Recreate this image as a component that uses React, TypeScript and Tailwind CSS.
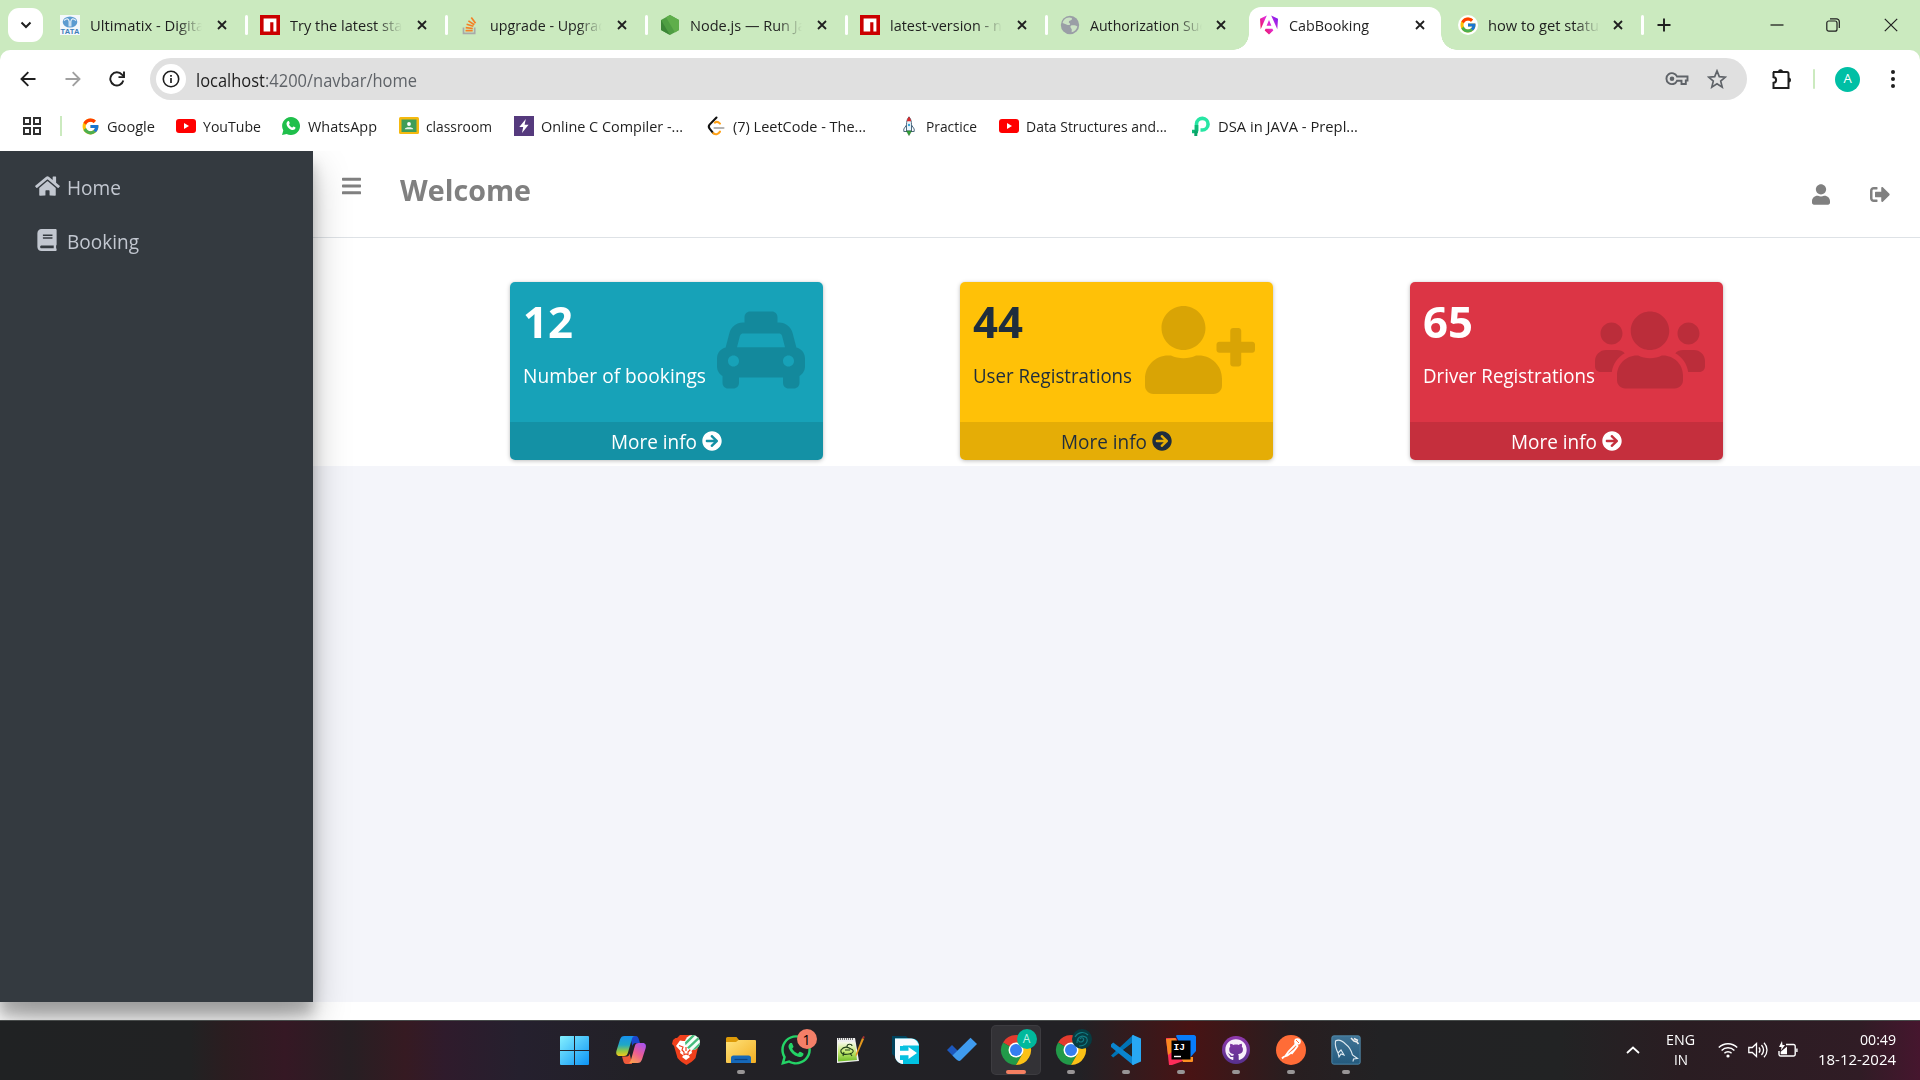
import { useLayoutEffect, useRef, useState, type ReactNode } from "react";
import { FaArrowCircleRight, FaBars, FaBook, FaGithub, FaHome, FaSignOutAlt, FaTaxi, FaUser, FaUserPlus, FaUsers, FaWhatsapp } from "react-icons/fa";
import { FcGoogle } from "react-icons/fc";

/** Single-line label condensed or expanded to a set width. */
function Label({ w, className = "", children }: { w: number; className?: string; children: string }) {
  const ref = useRef<HTMLSpanElement>(null);
  const [scale, setScale] = useState(1);
  useLayoutEffect(() => {
    if (ref.current) setScale(w / ref.current.getBoundingClientRect().width * scale);
  }, [w]);
  return (
    <span className={"block shrink-0 whitespace-nowrap " + className} style={{ width: w }}>
      <span ref={ref} className="inline-block origin-left" style={{ transform: `scaleX(${scale})` }}>{children}</span>
    </span>
  );
}

/* ---------- favicons ---------- */
const Tata = () => (
  <svg viewBox="0 0 20 20" className="h-5 w-5">
    <rect width="20" height="20" fill="#f4f8fb" />
    <ellipse cx="10" cy="7" rx="7.3" ry="5.6" fill="#5b9bd0" />
    <path d="M4 5.5c3-2.5 4.5-2 5.2 1v5M16 5.5c-3-2.5-4.5-2-5.2 1v5" stroke="#e8f1f8" strokeWidth="1.2" fill="none" />
    <text x="10" y="19" fontSize="7.5" fontWeight="800" textAnchor="middle" textLength="19" fill="#3f7fb9" fontFamily="Liberation Sans">TATA</text>
  </svg>
);
const Npm = () => (
  <svg viewBox="0 0 20 20" className="h-5 w-5">
    <rect width="20" height="20" fill="#cb0000" />
    <path d="M3.6 3.6h12.8v12.8h-3V7.2h-3.2v9.2H3.6z" fill="#fff" />
  </svg>
);
const Stack = () => (
  <svg viewBox="0 0 20 20" className="h-5 w-5" fill="none" strokeWidth="1.7">
    <path d="M3.5 12.5v5.8h11.2v-5.8" stroke="#a9a9a9" />
    <path d="M5.5 15.6h7.2M5.7 12.6l7.1.9M6.6 9.2l6.8 2M8.4 5.9l5.9 3.8M11.3 2.6l4.2 5.7" stroke="#f48024" />
  </svg>
);
const Node = () => (
  <svg viewBox="0 0 20 20" className="h-5 w-5">
    <path d="M10 0l9 5v10l-9 5-9-5V5z" fill="#4f9e43" />
    <path d="M10 0l9 5v10l-4 2.4L6 2.3z" fill="#5fae4b" />
    <path d="M1 5l9 15-9-5z" fill="#3c8637" />
  </svg>
);
const Globe = () => (
  <svg viewBox="0 0 20 20" className="h-5 w-5">
    <circle cx="10" cy="10" r="9.2" fill="#9a9ea6" />
    <path d="M9 2.4c2 0 4 .8 2.6 2.4-1 1-2.6.6-2.8 2.2-.2 1.2 1.6 1 1.2 2.4-.4 1.2-2.4.6-3.6 0L2.6 8C3.2 5 5.6 2.6 9 2.4zM11 10.6c2-.8 5-.2 6.4 1-.8 3-2.8 5-5.6 5.6-.6-1.4.6-2.2-.4-3.4-.8-1-1.6-2.4-.4-3.2z" fill="#cbe2c4" />
  </svg>
);
const Angular = () => (
  <svg viewBox="0 0 20 20" className="h-5 w-5">
    <defs>
      <linearGradient id="ng" x1="0" y1="0.8" x2="1" y2="0.1">
        <stop offset="0" stopColor="#f0123f" /><stop offset=".5" stopColor="#e32bd6" /><stop offset="1" stopColor="#7a1cf0" />
      </linearGradient>
    </defs>
    <path d="M12.2.6l6.8 3.2-.7 10.4zM14.3 15.6L10 19.4l-4.3-3.8.9-1.8h6.8zM7.6 10.8L10 5l2.4 5.8zM1.7 14.2L1 3.8 7.8.6z" fill="url(#ng)" />
  </svg>
);
const YouTube = () => (
  <svg viewBox="0 0 20 20" className="h-5 w-5">
    <rect y="3" width="20" height="14" rx="3" fill="#f00" />
    <path d="M8 7l5 3-5 3z" fill="#fff" />
  </svg>
);
const WhatsAppSmall = () => (
  <svg viewBox="0 0 20 20" className="h-5 w-5">
    <path d="M10 1a9 9 0 11-4.3 16.9L1 19l1.3-4.5A9 9 0 0110 1z" fill="#1fbf4b" />
    <path d="M6.8 5.3c.8-.6 1.3-.1 1.9 1.7.2.7-.8 1-.6 1.5.6 1.4 1.6 2.3 2.9 2.9.7.2 1-1.2 1.7-1 1.5.6 2 1 1.8 1.6-.5 2-2.6 2.5-4.9 1.4C7.5 12.5 5.8 10.500 5.500 8c0-1.200.5-2.100 1.300-2.700z" fill="#fff" />
  </svg>
);
const Classroom = () => (
  <svg viewBox="0 0 20 20" className="h-5 w-5">
    <rect y="1" width="20" height="17" rx="1.5" fill="#f5b90f" />
    <rect x="2.5" y="3.5" width="15" height="12.5" fill="#3f9d58" />
    <circle cx="10" cy="8" r="1.9" fill="#fff" />
    <path d="M5.8 13.3c0-2.6 8.4-2.6 8.4 0z" fill="#e5f3e8" />
  </svg>
);
const Bolt = () => (
  <svg viewBox="0 0 20 20" className="h-5 w-5">
    <rect width="20" height="20" fill="#553a7d" />
    <path d="M11.8 3L5.3 11h3.9L8 17l6.6-8.3h-4z" fill="#fff" />
  </svg>
);
const Leet = () => (
  <svg viewBox="0 0 20 20" className="h-5 w-5" fill="none" strokeWidth="2.1" strokeLinecap="round">
    <path d="M10.5 1.5L3.6 8.6c-1 1.2-1 2.7 0 4l3.6 4.6" stroke="#111" />
    <path d="M14 15.7c-2 3-4.6 3.2-6.8 1.5M14 7.6c-1.6-1.7-3.5-2.3-5.2-1" stroke="#ffa116" />
    <path d="M8.5 12h9" stroke="#b3b3b3" />
  </svg>
);
const Rocket = () => (
  <svg viewBox="0 0 20 20" className="h-5 w-5">
    <path d="M7.5 9l-2.700 4v2.500h10.400V13L12.500 9z" fill="#fff" stroke="#4d6980" />
    <path d="M10 .8c2 2 2.500 5 2.500 8V15h-5V8.800c0-3 .5-6 2.500-8z" fill="#eaf5fb" stroke="#4d6980" />
    <path d="M10 .8C8.800 2 8.200 3.500 7.900 5.200h4.200C11.800 3.500 11.200 2 10 .8z" fill="#d92b2b" />
    <circle cx="10" cy="9" r="1.2" fill="#3ca4d8" />
    <path d="M7.500 15h5L10 19.500z" fill="#2fa836" stroke="#28692c" strokeWidth=".6" />
  </svg>
);
const Prep = () => (
  <svg viewBox="0 0 20 20" className="h-5 w-5" fill="none">
    <path d="M5.500 15V7.800a5.800 5.800 0 115.800 6.200H9.500" stroke="#27e6a4" strokeWidth="3.6" />
    <path d="M5.500 9v6.500M1 15.500h6" stroke="#0eb978" strokeWidth="3.6" />
    <path d="M4.800 14.500V20" stroke="#0aa468" strokeWidth="3" />
  </svg>
);

/* ---------- tab strip ---------- */
const Close = () => (
  <svg viewBox="0 0 10 10" className="h-[10px] w-[10px] shrink-0"><path d="M1 1l8 8M9 1L1 9" stroke="#1f1f1f" strokeWidth="1.8" /></svg>
);

function Tab({ icon, title, w, size = "w-[200px]", close = "ml-[15px]", divider = "ml-[18px]" }: { icon: ReactNode; title: string; w: number; size?: string; close?: string; divider?: string }) {
  return (
    <div className={"flex h-full shrink-0 items-center " + size}>
      <span className="flex w-5 shrink-0 justify-center">{icon}</span>
      <span className="ml-[10px] w-[112px] shrink-0 overflow-hidden pt-px [mask-image:linear-gradient(to_right,black_78%,transparent)]">
        <Label w={w}>{title}</Label>
      </span>
      <span className={"flex shrink-0 " + close}><Close /></span>
      {divider && <span className={"h-5 w-[3px] shrink-0 rounded-full bg-white " + divider} />}
    </div>
  );
}

function TabStrip() {
  return (
    <div className="flex h-[50px] items-center bg-[#cbeabf] text-[15px] text-[#1f1f1f]">
      <div className="ml-2 flex h-[34px] w-[35px] shrink-0 items-center justify-center rounded-[11px] bg-white">
        <svg viewBox="0 0 12 8" className="h-[8px] w-[12px]"><path d="M1.5 1.5L6 6l4.5-4.500" fill="none" stroke="#1f1f1f" strokeWidth="2" /></svg>
      </div>
      <div className="ml-[17px] flex h-full">
        <Tab icon={<Tata />} title="Ultimatix - Digital" w={118} />
        <Tab icon={<Npm />} title="Try the latest stable" w={133} />
        <Tab icon={<Stack />} title="upgrade - Upgrade" w={125} />
        <Tab icon={<Node />} title="Node.js — Run Jav" w={123} />
        <Tab icon={<Npm />} title="latest-version - npm" w={134} />
        <Tab icon={<Globe />} title="Authorization Succ" w={123} size="w-[189px]" close="ml-[14px]" divider="" />
      </div>
      <div className="relative mt-[7px] flex h-[43px] w-[192px] shrink-0 items-center rounded-t-[12px] bg-white pb-[7px]">
        <span className="absolute -left-4 bottom-0 h-4 w-4 bg-[radial-gradient(circle_at_0_0,#cbeabf_15.5px,white_16px)]" />
        <span className="absolute -right-4 bottom-0 h-4 w-4 bg-[radial-gradient(circle_at_100%_0,#cbeabf_15.5px,white_16px)]" />
        <span className="ml-[10px]"><Angular /></span>
        <span className="ml-[10px] pt-px"><Label w={80}>CabBooking</Label></span>
        <span className="ml-[46px] flex"><Close /></span>
      </div>
      <div className="ml-[17px] flex h-full">
        <Tab icon={<span className="flex h-5 w-5 items-center justify-center rounded-full bg-white"><FcGoogle size={18} /></span>} title="how to get status" w={118} size="w-[187px]" close="ml-[13px]" divider="ml-[18px]" />
      </div>
      <svg viewBox="0 0 14 14" className="ml-[12px] h-[14px] w-[14px]"><path d="M7 .5v13M.5 7h13" stroke="#1f1f1f" strokeWidth="1.9" /></svg>
      <div className="ml-auto flex items-center text-[#1f1f1f]">
        <svg viewBox="0 0 14 14" className="h-[14px] w-[14px]"><path d="M.5 7h13" stroke="currentColor" strokeWidth="1.3" /></svg>
        <svg viewBox="0 0 14 14" className="ml-[42px] h-[14px] w-[14px]" fill="none" stroke="currentColor" strokeWidth="1.2"><rect x=".8" y="3" width="10.2" height="10.2" rx="2" /><path d="M4 .8h6.500a2.800 2.800 0 012.800 2.800V10" /></svg>
        <svg viewBox="0 0 14 14" className="ml-[44px] mr-[22px] h-[14px] w-[14px]"><path d="M.8.8l12.400 12.400M13.200.8L.8 13.200" stroke="currentColor" strokeWidth="1.2" /></svg>
      </div>
    </div>
  );
}

/* ---------- toolbar ---------- */
function Toolbar() {
  return (
    <div className="bg-[#cbeabf]">
      <div className="flex h-[58px] items-center rounded-t-[10px] bg-white text-[#1f1f1f]">
        <svg viewBox="0 0 16 16" className="ml-[20px] h-4 w-4" fill="none" stroke="#1f1f1f" strokeWidth="1.9"><path d="M15.5 8H2M8.300 1.200L1.500 8l6.800 6.800" /></svg>
        <svg viewBox="0 0 16 16" className="ml-[29px] h-4 w-4" fill="none" stroke="#a0a0a0" strokeWidth="1.9"><path d="M.5 8H14M7.700 1.200L14.500 8l-6.800 6.800" /></svg>
        <svg viewBox="0 0 16 16" className="ml-[28px] h-4 w-4" fill="none" stroke="#1f1f1f" strokeWidth="1.9"><path d="M14.300 9.500A6.600 6.600 0 1113 3.700l2 2" /><path d="M15 .5v5.600H9.500" /></svg>
        <div className="ml-[25px] flex h-[42px] w-[1597px] shrink-0 items-center rounded-full bg-[#e0e0e0]">
          <span className="ml-[6px] flex h-[30px] w-[30px] items-center justify-center rounded-full bg-white">
            <svg viewBox="0 0 18 18" className="h-[18px] w-[18px]" fill="none" stroke="#1f1f1f"><circle cx="9" cy="9" r="7.7" strokeWidth="1.6" /><path d="M9 8v5M9 5v1.800" strokeWidth="1.7" /></svg>
          </span>
          <span className="ml-[10px] flex pt-[2px] text-[17.500px]">
            <Label w={69}>localhost</Label>
            <Label w={152} className="text-[#5f6368]">:4200/navbar/home</Label>
          </span>
          <svg viewBox="0 0 24 16" className="ml-auto h-4 w-6" fill="none" stroke="#5f6368" strokeWidth="1.9"><path d="M12 5.500h10.500v4H20.800V13H16.500V9.800H12a5.500 5.500 0 110-4.300z" /><circle cx="7" cy="7.700" r="2.3" fill="#5f6368" stroke="none" /></svg>
          <svg viewBox="0 0 20 20" className="ml-[18px] mr-[20px] h-5 w-5" fill="none" stroke="#5f6368" strokeWidth="1.7"><path d="M10 1.900l2.300 5.700 6.100.5-4.700 4 1.500 6L10 14.800l-5.200 3.300 1.500-6-4.700-4 6.100-.5z" /></svg>
        </div>
        <svg viewBox="0 0 22 22" className="ml-[23px] h-[22px] w-[22px]" fill="none" stroke="#1f1f1f" strokeWidth="2"><path d="M3 4h14a1.500 1.500 0 011.500 1.500V20H3.500v-5.200c3.500-.3 3.500-5.300 0-5.600V4z" /><path d="M8 3.700a2.500 2.500 0 015 0zM18.500 9.500a2.500 2.500 0 010 5z" fill="#1f1f1f" stroke="none" /></svg>
        <span className="ml-[21px] h-5 w-[2px] rounded bg-[#cbeabf]" />
        <span className="ml-[20px] flex h-[25px] w-[25px] items-center justify-center rounded-full bg-[#00bfa5] text-[13px] text-white">A</span>
        <svg viewBox="0 0 4 18" className="ml-[31px] h-[18px] w-1" fill="#1f1f1f"><circle cx="2" cy="2" r="2" /><circle cx="2" cy="9" r="2" /><circle cx="2" cy="16" r="2" /></svg>
      </div>
    </div>
  );
}

function Bookmark({ icon, text, w, slot }: { icon: ReactNode; text: string; w: number; slot: string }) {
  return (
    <div className={"flex shrink-0 items-center gap-2 " + slot}>
      <span className="shrink-0">{icon}</span>
      <Label w={w} className="-ml-px">{text}</Label>
    </div>
  );
}

function Bookmarks() {
  return (
    <div className="flex h-[43px] items-center bg-white pb-[7px] text-[15px] text-[#1f1f1f]">
      <svg viewBox="0 0 18 18" className="ml-[23px] h-[18px] w-[18px]" fill="none" stroke="#303030" strokeWidth="2"><path d="M1 1h6v6H1zM11 1h6v6h-6zM1 11h6v6H1zM11 11h6v6h-6z" /></svg>
      <span className="ml-[19px] mr-[17px] h-5 w-[2px] bg-[#cbeabf]" />
      <Bookmark icon={<FcGoogle size={19} />} text="Google" w={48} slot="w-[97px] pl-[2px]" />
      <Bookmark icon={<YouTube />} text="YouTube" w={58} slot="w-[105px]" />
      <Bookmark icon={<WhatsAppSmall />} text="WhatsApp" w={69} slot="w-[118px]" />
      <Bookmark icon={<Classroom />} text="classroom" w={66} slot="w-[115px]" />
      <Bookmark icon={<Bolt />} text="Online C Compiler -..." w={142} slot="w-[192px]" />
      <Bookmark icon={<Leet />} text="(7) LeetCode - The..." w={133} slot="w-[193px]" />
      <Bookmark icon={<Rocket />} text="Practice" w={51} slot="w-[100px]" />
      <Bookmark icon={<YouTube />} text="Data Structures and..." w={141} slot="w-[192px]" />
      <Bookmark icon={<Prep />} text="DSA in JAVA - Prepl..." w={140} slot="w-[190px]" />
    </div>
  );
}

/* ---------- dashboard ---------- */
function StatCard({ n, nw, label, w, bg, fg, icon }: { n: string; nw: number; label: string; w: number; bg: string; fg: string; icon: ReactNode }) {
  return (
    <div className={"relative flex h-[178px] w-[313px] flex-col overflow-hidden rounded-[5px] " + bg + " " + fg}>
      <div className="flex h-[140px] flex-col pl-[13px]">
        <Label w={nw} className="mt-[7px] text-[43.500px] font-bold leading-[66px]">{n}</Label>
        <Label w={w} className="mt-[7px] text-[20px] leading-[28px]">{label}</Label>
      </div>
      <div className="absolute right-[18px] top-[24px] text-black/15">{icon}</div>
      <div className="flex h-[38px] items-center justify-center gap-[5px] bg-black/10 text-[20px]">
        <Label w={86} className="pt-[2px] leading-[36px]">More info</Label>
        <FaArrowCircleRight size={20} />
      </div>
    </div>
  );
}

const cardShadow = "rounded-[5px] shadow-[0_0_1px_rgba(0,0,0,.125),0_1px_4px_rgba(0,0,0,.25)]";

function Dashboard() {
  return (
    <div className="relative flex h-[869px] overflow-hidden bg-white">
      <aside className="relative z-10 h-[851px] w-[313px] shrink-0 bg-[#343a40] text-[20px] text-[#c2c7d0] shadow-[0_17.5px_35px_rgba(0,0,0,.25),0_12.5px_12.5px_rgba(0,0,0,.22)]">
        <div className="mt-[8px] flex h-[54px] items-center pl-[35px]">
          <span className="flex w-[25px] justify-center"><FaHome className="h-[22px] w-[25px]" /></span>
          <Label w={54} className="ml-[7px] pt-[3px]">Home</Label>
        </div>
        <div className="flex h-[54px] items-center pl-[34px]">
          <span className="flex w-[25px] justify-center"><FaBook className="h-[22px] w-[20px]" /></span>
          <Label w={72} className="ml-[8px] pt-[3px]">Booking</Label>
        </div>
      </aside>
      <main className="h-[851px] flex-1 bg-[#f4f5fa]">
        <div className="h-[315px] bg-white">
          <header className="flex h-[87px] items-start border-b border-[#dee2e6] text-[#808080]">
            <FaBars className="ml-[29px] mt-[24px] h-[22px] w-[19px]" />
            <Label w={131} className="ml-[39px] mt-[16px] text-[29px] font-bold leading-[46px]">Welcome</Label>
            <FaUser className="ml-auto mt-[33px] h-[21px] w-[18px]" />
            <FaSignOutAlt className="ml-[40px] mr-[30px] mt-[33px] h-[21px] w-[20px]" />
          </header>
          <div className="ml-[197px] mt-[44px] flex gap-[137px]">
            <div className={cardShadow}><StatCard n="12" nw={50} label="Number of bookings" w={183} bg="bg-[#17a2b8]" fg="text-white" icon={<FaTaxi className="h-[88px] w-[88px]" />} /></div>
            <div className={cardShadow}><StatCard n="44" nw={50} label="User Registrations" w={159} bg="bg-[#ffc107]" fg="text-[#1f2d3d]" icon={<FaUserPlus className="h-[88px] w-[110px]" />} /></div>
            <div className={cardShadow}><StatCard n="65" nw={50} label="Driver Registrations" w={172} bg="bg-[#dc3545]" fg="text-white" icon={<FaUsers className="h-[88px] w-[110px]" />} /></div>
          </div>
        </div>
      </main>
    </div>
  );
}

/* ---------- taskbar icons, drawn on a 30px grid ---------- */
const box = "h-[30px] w-[30px] overflow-visible";
const Windows = () => (
  <svg viewBox="0 0 30 30" className={box}>
    <defs><linearGradient id="win" x1="0" y1="0" x2="1" y2="1"><stop stopColor="#84f0ff" /><stop offset="1" stopColor="#0c93f5" /></linearGradient></defs>
    <path d="M0 2a1 1 0 011-1h13v14H0zM15 1h13a1 1 0 011 1v13H15zM0 16h14v14H1a1 1 0 01-1-1zM15 16h14v13a1 1 0 01-1 1H15z" fill="url(#win)" />
  </svg>
);
const Copilot = () => (
  <svg viewBox="0 0 30 30" className={box}>
    <defs>
      <linearGradient id="cp1" x1="0" y1="0" x2="0" y2="1"><stop stopColor="#1691ee" /><stop offset=".45" stopColor="#20a8c5" /><stop offset=".75" stopColor="#94c843" /><stop offset="1" stopColor="#f3c71b" /></linearGradient>
      <linearGradient id="cp2" x1=".8" y1="0" x2=".2" y2="1"><stop stopColor="#a953ed" /><stop offset=".5" stopColor="#ec5d93" /><stop offset="1" stopColor="#fba34c" /></linearGradient>
    </defs>
    <path d="M14 1h5.500c2.500 0 3 2 3.600 4L24 8h-4c-2 0-3 1-3.700 3z" fill="#1b47cd" />
    <path d="M16 29h-5.500c-2.500 0-3-2-3.500-4l-1-3.500h4.500c2 0 2.500-1 3.200-3z" fill="#ee5a3b" />
    <path d="M8.500 1H19c-2 0-2.700 1.500-3.400 4L12 17.500c-.8 2.500-1.500 3.500-4 3.500H3.500C.5 21-.2 18.500.4 16L4 4.500C5 2 6 1 8.500 1z" fill="url(#cp1)" />
    <path d="M21.500 28H12c2 0 2.500-1.500 3.200-4l3.500-12.500c.7-2.500 1.300-3.500 4-3.500h4c3 0 3.700 2.500 3 5L26 24.500c-1 2.500-2 3.500-4.500 3.500z" fill="url(#cp2)" />
  </svg>
);
const Brave = () => (
  <svg viewBox="0 0 30 30" className={box}>
    <defs><clipPath id="braveDisc"><circle cx="21.500" cy="7.500" r="7.500" /></clipPath></defs>
    <path d="M9 0h12l3 3 2 1 1 5 .5 1-3 13c-2 3-6 5-9 7-3-2-7-4-9-7L3 11l-2-2 1-4 2.500-2H6z" fill="#f0401c" />
    <path d="M9 5.500l3 .5h7l5 6-3.500 4 .5 2-3.500 2.500 1.500 1.500-4 3-4-3 1.500-1.500L9 18l.5-2L5 11z" fill="#fff" />
    <path d="M8 10.500l4 1.500-1 3 2 2v2.500M22 10.500L18 12l1 3-2 2v2.500M12.500 20l2.500-1 2.500 1M15 12v4" stroke="#f0401c" strokeWidth="1.200" fill="none" />
    <g clipPath="url(#braveDisc)">
      <rect x="13" width="17" height="16" fill="#f4fff8" />
      <path d="M12 11L24-1M15 15L30 1M20 18L32 6" stroke="#45bc7b" strokeWidth="2.300" />
    </g>
  </svg>
);
const Folder = () => (
  <svg viewBox="0 0 30 30" className={box}>
    <defs><linearGradient id="fold" x1="0" y1="0" x2="1" y2="1"><stop stopColor="#ffe27a" /><stop offset="1" stopColor="#f2ae22" /></linearGradient></defs>
    <path d="M0 3.500A1.500 1.500 0 011.500 2h9L13 5v5H0z" fill="#dd9a08" />
    <path d="M0 7h10l2.500-2H29a1 1 0 011 1v21a1 1 0 01-1 1H1a1 1 0 01-1-1z" fill="url(#fold)" />
    <path d="M5 28v-5a2.500 2.500 0 012.500-2.500h15A2.500 2.500 0 0125 23v5z" fill="#1668b8" />
    <path d="M8.500 24.500h13" stroke="#0b4282" strokeWidth="1.2" />
  </svg>
);
const WhatsAppApp = () => (
  <span className="relative">
    <FaWhatsapp size={34} className="-m-[2px] text-[#24d366]" />
    <span className="absolute -right-[6px] -top-[6px] flex h-5 w-5 items-center justify-center rounded-full bg-[#f47f68] text-[14px] text-black">1</span>
  </span>
);
const NotepadPP = () => (
  <svg viewBox="0 0 30 30" className={box}>
    <defs><linearGradient id="npp" x1="0" y1="0" x2="0" y2="1"><stop stopColor="#f6f7ed" /><stop offset=".5" stopColor="#c6ea72" /><stop offset="1" stopColor="#6fbd26" /></linearGradient></defs>
    <path d="M1 3h18l4 23-22 2z" fill="#eee" />
    <path d="M2 7h17l2 18-19 1.500z" fill="url(#npp)" />
    <path d="M2 4h16" stroke="#777" strokeWidth="2" strokeDasharray="1 1" />
    <path d="M5 15c3-4 7-3 10-1 4 1 2 5-2 5-5 1-9 0-8-4zM11 12c0-4 5-3 5-1M8 17l-1 4M14 18l2 3M9 15h5" fill="none" stroke="#24421c" strokeWidth="1.1" />
    <path d="M28 4l-7 16-1.500 2 .3-3L26 3z" fill="#e2971d" />
    <path d="M26 3l1.200-2 1.500.8L28 4z" fill="#a33" />
  </svg>
);
const Transfer = () => (
  <svg viewBox="0 0 30 30" className={box}>
    <path d="M1 1h14l6 6H8v18l-7-6z" fill="#00435d" />
    <path d="M4 3.500h17c4 0 7 3 7 7V29H12c-4 0-8-4-8-8z" fill="#00c2e2" />
    <path d="M4 3.500h16c4 0 7 3 8 7H12v18.500c-4 0-8-4-8-8z" fill="#f7fbff" />
    <path d="M9 11h17v14H9z" fill="#06c0e0" />
    <path d="M8 15.800h9.500V12l8.500 6-8.500 6v-3.800H8z" fill="#fff" />
  </svg>
);
const ToDo = () => (
  <svg viewBox="0 0 30 30" className={box}>
    <path d="M1 15l5-5 9.500 9.500-5 5z" fill="#1c58bd" />
    <path d="M10.500 24.500L6.500 20.500 24.500 2.800 31 9 15 25c-1.500 1.500-3 1-4.500-.5z" fill="#3f9bee" />
  </svg>
);
const Chrome = ({ children }: { children: ReactNode }) => (
  <span className="relative">
    <svg viewBox="0 0 30 30" className={box}>
      <path d="M15 15L2 7.500A15 15 0 0128 7.500H15z" fill="#e33b2e" />
      <path d="M15 15L2 7.500A15 15 0 0015 30l6.500-11.200z" fill="#229a49" />
      <path d="M15 15V7.500h13A15 15 0 0115 30l6.500-11.200z" fill="#fbc116" />
      <circle cx="15" cy="15" r="7.5" fill="#fff" />
      <circle cx="15" cy="15" r="6" fill="#357ef0" />
    </svg>
    <span className="absolute -right-[6px] -top-[6px]">{children}</span>
  </span>
);
const VSCode = () => (
  <svg viewBox="0 0 30 30" className={box}>
    <path d="M0 20.500l2.200 2L23 6.500V0h-1z" fill="#0073b5" />
    <path d="M0 9.500l2.200-2L23 23v7h-1L0 12z" fill="#0a85cf" />
    <path d="M22 0l8 3.500v23L22 30c-.8-.2-1-.6-1-1.200V1.200C21 .6 21.200.2 22 0z" fill="#28a8f3" />
    <path d="M21 8.500v13L12.500 15z" fill="#242426" />
  </svg>
);
const IntelliJ = () => (
  <svg viewBox="0 0 30 30" className={box}>
    <path d="M0 3h10l10 22-14 5H3z" fill="#fd2d59" />
    <path d="M0 4l9-1 5 8-12 9z" fill="#fb8820" />
    <path d="M10 1c0-1 1-1 2-1h16c1 0 2 1 2 2v14l-8 9z" fill="#087cfa" />
    <path d="M15 22h12v4c0 1-1 1-2 1h-8z" fill="#fd9121" />
    <rect x="5.5" y="5.5" width="19" height="19" fill="#000" />
    <text x="7.5" y="15" fontSize="9.5" fontWeight="700" fill="#fff" fontFamily="Liberation Mono">IJ</text>
    <path d="M8 21.500h7" stroke="#fff" strokeWidth="1.4" />
  </svg>
);
const GitHub = () => (
  <span className="flex h-[28px] w-[28px] items-center justify-center rounded-full bg-gradient-to-b from-[#9039ad] to-[#56308d]"><FaGithub size={22} className="text-[#f7f0fa]" /></span>
);
const Postman = () => (
  <svg viewBox="0 0 30 30" className={box}>
    <circle cx="15" cy="15" r="15" fill="#ff6c37" />
    <circle cx="21.5" cy="6.500" r="3.300" fill="#fff" />
    <path d="M19 8l2.500 3-3 4-7 5.500-4 1.500-1.500 1.500M20 9l-7.500 7.500-3.500 5M21 12l-5.500 7" fill="none" stroke="#fff" strokeWidth="1.8" />
    <path d="M20 5l3 3" stroke="#ff6c37" />
  </svg>
);
const MySQL = () => (
  <svg viewBox="0 0 30 30" className={box}>
    <defs><linearGradient id="sql" x1="0" y1="0" x2="0" y2="1"><stop stopColor="#407496" /><stop offset="1" stopColor="#245a7d" /></linearGradient></defs>
    <rect x=".8" y=".8" width="28.4" height="28.4" rx="2" fill="url(#sql)" stroke="#5593b5" strokeWidth=".8" />
    <path d="M7 18c-2-4-3-9-2.500-12 3-2 7 0 10 3 4 3 6 7 7 11l5 3.500-4 .5-.5 2.500M7 18l3-3 3 5-3-1-2 3z" fill="none" stroke="#dfeaf1" strokeWidth="1.1" />
    <path d="M20 3l3 3 3 1 1.500 2M23 3.500l4 2" stroke="#eee" strokeWidth="1.5" fill="none" />
  </svg>
);

function TaskIcon({ children, active = false, open = false }: { children: ReactNode; active?: boolean; open?: boolean }) {
  return (
    <div className="flex w-[55px] shrink-0 justify-center">
      <div className={"flex h-[50px] w-[50px] flex-col items-center rounded-[5px] pt-[9px] " + (active ? "bg-white/8 ring-1 ring-inset ring-white/5" : "")}>
        <div className="flex h-[32px] items-center justify-center">{children}</div>
        {open && <span className={"mt-[4px] h-1 rounded-full " + (active ? "w-5 bg-[#f47f61]" : "w-2 bg-[#989596]")} />}
      </div>
    </div>
  );
}

function Taskbar() {
  return (
    <div className="flex h-[60px] border-t border-[#474b4a] bg-[linear-gradient(90deg,#202223_0,#212223_190px,#2b1d20_225px,#351824_285px,#271f23_350px,#361a22_405px,#2f1b2c_445px,#25202e_520px,#222126_640px,#222125_1080px,#481314_1190px,#281e20_1290px,#222224_1380px,#222324_1560px,#2a1d22_1680px,#301c25_1860px,#46162e_1920px)] pt-[4px] text-white">
      <div className="ml-[548px] flex">
        <TaskIcon><span className="-ml-px"><Windows /></span></TaskIcon>
        <TaskIcon><Copilot /></TaskIcon>
        <TaskIcon><Brave /></TaskIcon>
        <TaskIcon open><Folder /></TaskIcon>
        <TaskIcon><WhatsAppApp /></TaskIcon>
        <TaskIcon><NotepadPP /></TaskIcon>
        <TaskIcon><Transfer /></TaskIcon>
        <TaskIcon><ToDo /></TaskIcon>
        <TaskIcon open active><Chrome><span className="flex h-5 w-5 items-center justify-center rounded-full bg-[#00b99c] text-[12px] text-[#bdf1e5]">A</span></Chrome></TaskIcon>
        <TaskIcon open><Chrome>
          <svg viewBox="0 0 20 20" className="h-5 w-5"><circle cx="10" cy="10" r="10" fill="#073c42" /><path d="M3 8c3-5 9-6 13-2M5 14c0-6 5-9 10-5M7 17c7 0 10-5 7-9M8 10c2-3 5 0 3 2s-5 1-5-2" fill="none" stroke="#127d85" strokeWidth="1.1" /></svg>
        </Chrome></TaskIcon>
        <TaskIcon open><VSCode /></TaskIcon>
        <TaskIcon open><IntelliJ /></TaskIcon>
        <TaskIcon open><GitHub /></TaskIcon>
        <TaskIcon open><Postman /></TaskIcon>
        <TaskIcon open><MySQL /></TaskIcon>
      </div>
      <div className="ml-auto flex h-[50px] items-center pr-[24px] text-[14.5px] leading-[20px]">
        <svg viewBox="0 0 14 8" className="h-[8px] w-[14px]" fill="none" stroke="#fff" strokeWidth="1.8"><path d="M1 7l6-5.500L13 7" /></svg>
        <div className="ml-[26px] flex flex-col items-center"><Label w={29}>ENG</Label><Label w={14}>IN</Label></div>
        <svg viewBox="0 0 20 16" className="ml-[23px] h-4 w-5" fill="none" stroke="#fff" strokeWidth="1.5"><path d="M.8 5.500a13 13 0 0118.400 0M3.600 8.500a9 9 0 0112.800 0M6.400 11.300a5 5 0 017.200 0" /><circle cx="10" cy="14" r="1.6" fill="#fff" stroke="none" /></svg>
        <svg viewBox="0 0 20 18" className="ml-[10px] h-[18px] w-5" fill="none" stroke="#fff" strokeWidth="1.3"><path d="M.8 6.500h3.500l4.200-4v13l-4.200-4H.8zM11 6.300c1.200 1.600 1.200 3.800 0 5.400M13.500 4c2.500 3 2.500 7 0 10M16 1.800c4 4.200 4 10.200 0 14.400" /></svg>
        <svg viewBox="0 0 20 18" className="ml-[10px] h-[18px] w-5" fill="none" stroke="#fff" strokeWidth="1.4"><path d="M8 3.500h7.500A1.700 1.700 0 0117.200 5.200v8a1.700 1.700 0 01-1.700 1.800H2.700A1.700 1.700 0 011 13.200V10M18.900 7.500v3.500" /><path d="M9 5.500v7.700H2.700v-2.500zM4 0L1 6h2.500L3 9.500 7 4H4.500z" fill="#fff" stroke="none" /></svg>
        <div className="ml-[20px] flex flex-col items-end"><Label w={36}>00:49</Label><Label w={78}>18-12-2024</Label></div>
      </div>
    </div>
  );
}

export default function App() {
  return (
    <div className="flex h-[1080px] w-[1920px] flex-col overflow-hidden bg-white font-['Open_Sans','Noto_Sans',sans-serif]">
      <TabStrip />
      <Toolbar />
      <Bookmarks />
      <Dashboard />
      <Taskbar />
    </div>
  );
}
